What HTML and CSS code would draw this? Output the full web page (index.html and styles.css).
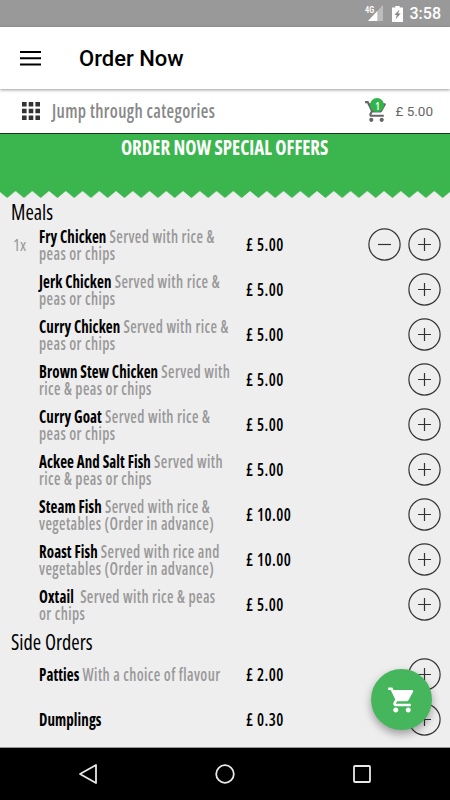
FILE: index.html
```html
<!DOCTYPE html>
<html lang="en">
<head>
    <meta charset="UTF-8">
    <meta name="viewport" content="width=device-width, initial-scale=1.0">
    <title>Order Now</title>
    <link rel="stylesheet" href="styles.css">
</head>
<body>
    <!-- shared icons -->
    <svg width="0" height="0" class="defs">
        <symbol id="cart" viewBox="0 0 24 24">
            <path d="M7 18c-1.1 0-1.99.9-1.99 2S5.9 22 7 22s2-.9 2-2-.9-2-2-2zM1 2v2h2l3.6 7.59-1.35 2.45c-.16.28-.25.61-.25.96 0 1.1.9 2 2 2h12v-2H7.42c-.14 0-.25-.11-.25-.25l.03-.12.9-1.63h7.45c.75 0 1.41-.41 1.75-1.03l3.58-6.49A1 1 0 0 0 20 4H5.21l-.94-2H1zm16 16c-1.1 0-1.99.9-1.99 2s.89 2 1.99 2 2-.9 2-2-.9-2-2-2z"/>
        </symbol>
        <symbol id="plus" viewBox="0 0 33 33">
            <circle cx="16.5" cy="16.5" r="15.6"/>
            <path d="M10 16.5h13M16.5 10v13"/>
        </symbol>
        <symbol id="minus" viewBox="0 0 33 33">
            <circle cx="16.5" cy="16.5" r="15.6"/>
            <path d="M10 16.5h13"/>
        </symbol>
    </svg>

    <div class="status-bar">
        <svg class="signal" width="20" height="17" viewBox="0 0 20 17">
            <path d="M19 0v16H4z" fill="#bdbdbd"/>
            <path d="M13.3 6v10H4z" fill="#fff"/>
        </svg>
        <span class="network">4G</span>
        <svg class="battery" width="11" height="16" viewBox="0 0 11 16">
            <path d="M3.3 0h4.4v1.5H11V16H0V1.5h3.3z" fill="#fff"/>
            <path d="M7.5 3.5L2.4 9h2.4l-1.2 4.2L8.7 7.6H6.2z" fill="#888"/>
        </svg>
        <span class="clock">3:58</span>
    </div>

    <header class="toolbar">
        <svg width="21" height="15" viewBox="0 0 21 15">
            <path d="M0 1h21M0 7.2h21M0 13.4h21" stroke="#000" stroke-width="2"/>
        </svg>
        <h1>Order Now</h1>
    </header>

    <div class="category-bar">
        <svg width="18" height="18" viewBox="0 0 18 18">
            <path d="M0 2.3h18M0 9h18M0 15.7h18" stroke="#333" stroke-width="4.4" stroke-dasharray="4.6 2.1"/>
        </svg>
        <span class="jump"><span class="narrow">Jump through categories</span></span>
        <div class="basket">
            <svg width="25" height="25"><use href="#cart"/></svg>
            <span class="badge">1</span>
        </div>
        <span class="total">£ 5.00</span>
    </div>

    <div class="offers">
        <h2><span class="narrow">ORDER NOW SPECIAL OFFERS</span></h2>
        <svg class="zigzag" width="450" height="7">
            <defs>
                <pattern id="teeth" x="-1.2" width="16.75" height="7" patternUnits="userSpaceOnUse">
                    <path d="M0 0L8.4 7L16.75 0z" fill="#3bb54e"/>
                </pattern>
            </defs>
            <rect width="450" height="7" fill="url(#teeth)"/>
        </svg>
    </div>

    <main class="menu">
        <h3><span class="narrow">Meals</span></h3>
        <div class="item">
            <span class="qty"><span class="narrow">1x</span></span>
            <p><span class="narrow"><b>Fry Chicken</b> Served with rice &amp;<br>peas or chips</span></p>
            <span class="price"><span class="narrow">£ 5.00</span></span>
            <div class="actions"><svg><use href="#minus"/></svg><svg><use href="#plus"/></svg></div>
        </div>
        <div class="item">
            <span class="qty"></span>
            <p><span class="narrow"><b>Jerk Chicken</b> Served with rice &amp;<br>peas or chips</span></p>
            <span class="price"><span class="narrow">£ 5.00</span></span>
            <div class="actions"><svg><use href="#plus"/></svg></div>
        </div>
        <div class="item">
            <span class="qty"></span>
            <p><span class="narrow"><b>Curry Chicken</b> Served with rice &amp;<br>peas or chips</span></p>
            <span class="price"><span class="narrow">£ 5.00</span></span>
            <div class="actions"><svg><use href="#plus"/></svg></div>
        </div>
        <div class="item">
            <span class="qty"></span>
            <p><span class="narrow"><b>Brown Stew Chicken</b> Served with<br>rice &amp; peas or chips</span></p>
            <span class="price"><span class="narrow">£ 5.00</span></span>
            <div class="actions"><svg><use href="#plus"/></svg></div>
        </div>
        <div class="item">
            <span class="qty"></span>
            <p><span class="narrow"><b>Curry Goat</b> Served with rice &amp;<br>peas or chips</span></p>
            <span class="price"><span class="narrow">£ 5.00</span></span>
            <div class="actions"><svg><use href="#plus"/></svg></div>
        </div>
        <div class="item">
            <span class="qty"></span>
            <p><span class="narrow"><b>Ackee And Salt Fish</b> Served with<br>rice &amp; peas or chips</span></p>
            <span class="price"><span class="narrow">£ 5.00</span></span>
            <div class="actions"><svg><use href="#plus"/></svg></div>
        </div>
        <div class="item">
            <span class="qty"></span>
            <p><span class="narrow"><b>Steam Fish</b> Served with rice &amp;<br>vegetables (Order in advance)</span></p>
            <span class="price"><span class="narrow">£ 10.00</span></span>
            <div class="actions"><svg><use href="#plus"/></svg></div>
        </div>
        <div class="item">
            <span class="qty"></span>
            <p><span class="narrow"><b>Roast Fish</b> Served with rice and<br>vegetables (Order in advance)</span></p>
            <span class="price"><span class="narrow">£ 10.00</span></span>
            <div class="actions"><svg><use href="#plus"/></svg></div>
        </div>
        <div class="item">
            <span class="qty"></span>
            <p><span class="narrow"><b>Oxtail</b>&nbsp; Served with rice &amp; peas<br>or chips</span></p>
            <span class="price"><span class="narrow">£ 5.00</span></span>
            <div class="actions"><svg><use href="#plus"/></svg></div>
        </div>

        <h3><span class="narrow">Side Orders</span></h3>
        <div class="item">
            <span class="qty"></span>
            <p><span class="narrow"><b>Patties</b> With a choice of flavour</span></p>
            <span class="price"><span class="narrow">£ 2.00</span></span>
            <div class="actions"><svg><use href="#plus"/></svg></div>
        </div>
        <div class="item">
            <span class="qty"></span>
            <p><span class="narrow"><b>Dumplings</b></span></p>
            <span class="price"><span class="narrow">£ 0.30</span></span>
            <div class="actions"><svg><use href="#plus"/></svg></div>
        </div>
    </main>

    <div class="fab">
        <svg width="30" height="30"><use href="#cart"/></svg>
    </div>

    <nav class="nav-bar">
        <svg width="20" height="22" viewBox="0 0 20 22"><path d="M18 2v18L2 11z"/></svg>
        <svg width="20" height="22" viewBox="0 0 20 22"><circle cx="10" cy="11" r="8.8"/></svg>
        <svg width="20" height="22" viewBox="0 0 20 22"><rect x="2" y="3" width="16" height="16" rx="1"/></svg>
    </nav>
</body>
</html>
```

FILE: styles.css
```css
* {
    box-sizing: border-box;
}
body {
    margin: 0;
    width: 450px;
    height: 800px;
    display: flex;
    flex-direction: column;
    position: relative;
    overflow: hidden;
    background: #eee;
    font-family: "Open Sans", "Noto Sans", sans-serif;
    font-stretch: 75%;
}
h1, h2, h3, p {
    margin: 0;
    font-weight: 400;
}
.defs {
    position: absolute;
}
.narrow {
    display: inline-block;
    white-space: nowrap;
    transform: scaleX(0.88);
    transform-origin: left center;
}

.status-bar {
    height: 27px;
    flex: none;
    display: flex;
    align-items: center;
    justify-content: flex-end;
    padding-right: 9px;
    background: #999;
    color: #fff;
    font-family: Roboto, sans-serif;
    font-stretch: normal;
    position: relative;
}
.network {
    position: absolute;
    left: 365px;
    top: 5px;
    font-size: 9px;
    line-height: 10px;
    font-weight: 700;
    transform: scaleX(0.8);
    transform-origin: left;
}
.signal {
    margin-right: 8px;
}
.battery {
    margin-right: 7px;
}
.clock {
    font-size: 16px;
    font-weight: 500;
    line-height: 28px;
}

.toolbar {
    height: 62px;
    flex: none;
    display: flex;
    align-items: center;
    padding-left: 20px;
    gap: 38px;
    background: #fff;
    box-shadow: 0 1px 3px rgba(0,0,0,0.4);
    z-index: 1;
}
.toolbar h1 {
    font-family: Roboto, sans-serif;
    font-stretch: normal;
    font-size: 22px;
    font-weight: 500;
    line-height: 26px;
    padding-top: 2px;
}

.category-bar {
    height: 44px;
    flex: none;
    display: flex;
    align-items: center;
    padding: 0 17px 0 22px;
    background: #fff;
}
.jump {
    flex: 1;
    margin-left: 12px;
    font-size: 19px;
    font-weight: 600;
    color: #888;
}
.jump .narrow {
    letter-spacing: 0.4px;
    transform: scaleX(0.91);
}
.basket {
    position: relative;
    height: 25px;
    margin-right: 6px;
}
.basket svg {
    fill: #666;
    display: block;
}
.badge {
    position: absolute;
    left: 6px;
    top: -1px;
    width: 14px;
    height: 14px;
    border-radius: 50%;
    background: #31b44b;
    color: #fff;
    font-size: 10px;
    font-weight: 600;
    line-height: 16px;
    text-align: center;
}
.total {
    font-family: Roboto, sans-serif;
    font-stretch: normal;
    font-size: 13.5px;
    color: #666;
}

.offers {
    height: 65px;
    flex: none;
    display: flex;
    flex-direction: column;
    justify-content: space-between;
    border-top: 1px solid #17391d;
    background: linear-gradient(#3bb54e, #3bb54e) no-repeat 0 0 / 100% 57px;
}
.offers h2 {
    text-align: center;
    font-size: 22px;
    font-weight: 700;
    line-height: 25px;
    color: #fff;
}
.offers .narrow {
    transform: scaleX(0.86);
    transform-origin: center;
}
.zigzag {
    display: block;
}

.menu {
    flex: 1;
    min-height: 0;
    margin-top: -1px;
    overflow: hidden;
}
.menu h3 {
    height: 25px;
    padding-left: 11px;
    font-size: 22px;
    line-height: 29px;
}
.menu h3 .narrow {
    transform: scaleX(0.92);
}
.item {
    height: 45px;
    display: flex;
    align-items: center;
    padding-right: 9px;
}
.qty {
    width: 26px;
    margin-left: 13px;
    font-size: 17px;
    color: #999;
}
.qty .narrow {
    transform: scaleX(0.98);
}
.item p {
    width: 207px;
    font-size: 17px;
    font-weight: 600;
    line-height: 17px;
    color: #999;
}
.item p .narrow {
    letter-spacing: 0.45px;
}
.item b {
    font-weight: 700;
    letter-spacing: 0.1px;
    color: #000;
}
.price {
    padding-bottom: 1px;
    font-size: 17px;
    font-weight: 550;
}
.price .narrow {
    letter-spacing: 0.5px;
    transform: scaleX(0.93);
}
.actions {
    margin-left: auto;
    display: flex;
    gap: 7px;
}
.actions svg {
    width: 33px;
    height: 33px;
    fill: none;
    stroke: #333;
    stroke-width: 1.2;
}

.fab {
    position: absolute;
    left: 371px;
    top: 669px;
    width: 61px;
    height: 61px;
    border-radius: 50%;
    display: flex;
    align-items: center;
    justify-content: center;
    background: #46b65c;
    box-shadow: 0 4px 8px rgba(0,0,0,0.35);
}
.fab svg {
    fill: #fff;
}

.nav-bar {
    height: 53px;
    flex: none;
    display: flex;
    align-items: center;
    justify-content: center;
    gap: 117px;
    border-top: 1px solid #999;
    background: #000;
}
.nav-bar svg {
    fill: none;
    stroke: #e8e8e8;
    stroke-width: 1.8;
    stroke-linejoin: round;
}
```
